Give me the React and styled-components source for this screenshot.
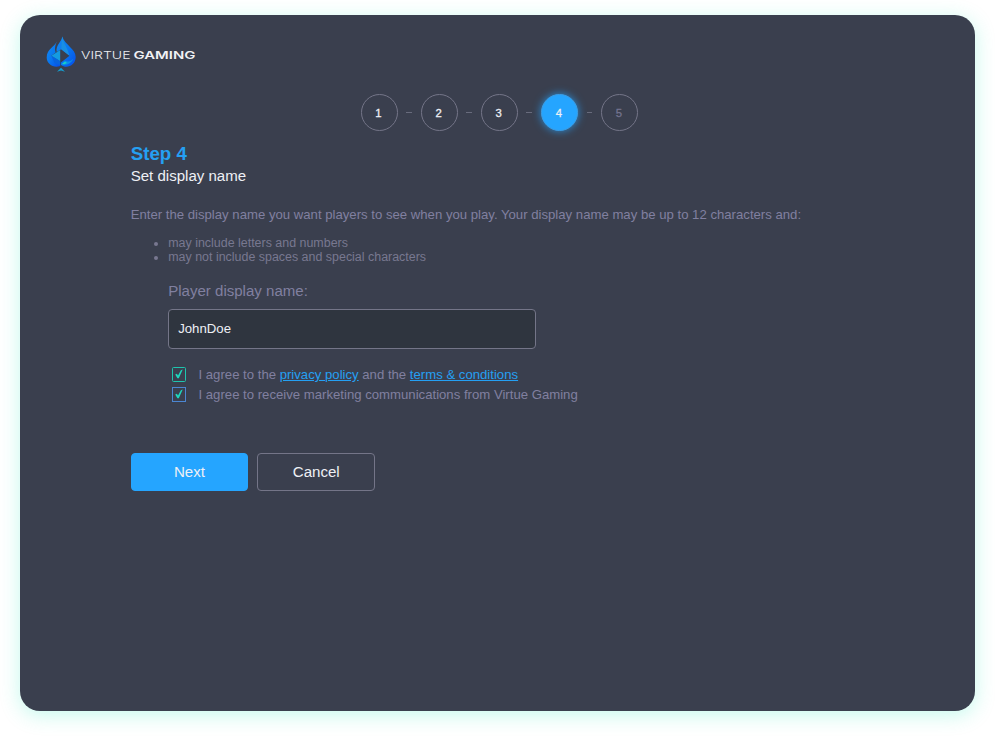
import React, { useState } from "react";
import styled, { createGlobalStyle, css } from "styled-components";

const Global = createGlobalStyle`
  * { box-sizing: border-box; }
  body {
    margin: 0;
    background: #fff;
    font-family: "Liberation Sans", Arial, Helvetica, sans-serif;
    color: #8180a0;
  }
`;

const Page = styled.div`
  height: 736px;
  padding: 15px 20px 25px;
  overflow: hidden;
`;

const Card = styled.main`
  display: flex;
  flex-direction: column;
  height: 696px;
  border-radius: 20px;
  background: #3a3f4e;
  box-shadow: 0 4px 20px rgba(40, 232, 190, 0.27);
`;

const Header = styled.header`
  height: 78.5px;
  padding: 20px 0 0 26px;
`;

const LogoSvg = styled.svg`
  display: block;
`;

const Steps = styled.ol`
  display: flex;
  align-items: center;
  gap: 8.7px;
  height: 37px;
  margin: 0 0 0 340.5px;
  padding: 0;
  list-style: none;
`;

const Step = styled.li`
  display: flex;
  align-items: center;
  justify-content: center;
  width: 37px;
  height: 37px;
  padding: 1px 1px 0 0;
  border: 1px solid #747588;
  border-radius: 50%;
  font-size: 11.3px;
  -webkit-text-stroke: 0.3px currentColor;
  color: ${(p) => (p.$state === "upcoming" ? "#73738f" : "#eef0f5")};
  ${(p) =>
    p.$state === "current" &&
    css`
      background: #25a5ff;
      border-color: #3d9de4;
      box-shadow: 0 0 9px rgba(37, 165, 255, 0.8);
    `}
`;

const Dash = styled.li`
  width: 5.75px;
  height: 1px;
  background: #686b7c;
`;

const Content = styled.form`
  display: flex;
  flex-direction: column;
  align-items: flex-start;
  padding: 12.4px 0 0 110.7px;
`;

const Title = styled.h1`
  margin: 0;
  font-size: 18.7px;
  line-height: 22px;
  color: #25a0f3;
`;

const Subtitle = styled.h2`
  margin: 0;
  font-size: 15.05px;
  font-weight: 400;
  line-height: 22px;
  color: #eef0f5;
`;

const Intro = styled.p`
  margin: 19.6px 0 0;
  font-size: 13.17px;
  line-height: 18px;
  white-space: nowrap;
`;

const Rules = styled.ul`
  margin: 11.5px 0 0;
  padding: 0 0 0 37.5px;
  font-size: 12.45px;
  line-height: 14px;
  color: #787890;
`;

const Fields = styled.div`
  display: flex;
  flex-direction: column;
  padding-left: 37.5px;
`;

const Label = styled.label`
  margin-top: 17px;
  font-size: 15.05px;
  line-height: 20px;
`;

const Input = styled.input`
  width: 368px;
  height: 40px;
  margin: 8px 0 15.5px;
  padding: 0 9px 1px;
  border: 1px solid #747588;
  border-radius: 4px;
  outline: none;
  background: #2f353f;
  color: #eef0f5;
  font-family: inherit;
  font-size: 13.2px;
`;

const CheckRow = styled.label`
  display: flex;
  align-items: center;
  gap: 12px;
  height: 20px;
  padding-left: 3.8px;
  font-size: 13.17px;
  white-space: nowrap;
`;

const Box = styled.span`
  display: flex;
  align-items: center;
  justify-content: center;
  width: 14.5px;
  height: 14.5px;
  border: 1px solid ${(p) => p.$color};
  border-radius: ${(p) => p.$radius};
`;

const HiddenCheck = styled.input`
  display: none;
`;

const Link = styled.a`
  color: #25a0f3;
  text-decoration: underline;
`;

const Actions = styled.div`
  display: flex;
  gap: 9.3px;
  margin-top: 48.5px;
`;

const Button = styled.button`
  width: 117.5px;
  height: 38px;
  padding: 0 0 1px;
  border: 1px solid ${(p) => (p.$primary ? "#25a5ff" : "#747588")};
  border-radius: 4px;
  background: ${(p) => (p.$primary ? "#25a5ff" : "transparent")};
  color: #eef0f5;
  font-family: inherit;
  font-size: 15.1px;
`;

function Logo() {
  return (
    <LogoSvg width="152" height="40" viewBox="0 0 152 40" role="img" aria-label="Virtue Gaming">
      <defs>
        <linearGradient id="spade" x1="0" y1="0" x2="1" y2="1">
          <stop offset="0" stopColor="#1689f0" />
          <stop offset="0.5" stopColor="#0878f0" />
          <stop offset="1" stopColor="#064bea" />
        </linearGradient>
      </defs>
      <path d="M10.700 6.500C9 11.500.7 14 .7 22.500c0 6.500 7 11 13.500 8.500v-4.700L5.300 20.700 9.700 17.500C8 13 10 9.500 10.700 6.500Z" fill="url(#spade)" />
      <path d="M16.200 1.500C16 6.500 9.500 10 10.700 17L15.200 14.300 23.500 20.700 15 27.500v2.500c6 4.500 14.700 0 14.700-8C29.700 14 19 10 16.200 1.500Z" fill="url(#spade)" />
      <path d="M16.200 1.500c1 6.500 5 10.500 7.300 19.200L15.200 14.300Z" fill="#1a8fe2" />
      <path d="M5.300 20.700 14.200 15v11.300Z" fill="#149be1" />
      <path d="m5.300 20.700 8.900 5.600v4.200L8.500 28Z" fill="#0763de" />
      <path d="M15 29.500c5 1.500 10.500-1 12.500-6-2.500 3-5 3.500-8.500 2.500Z" fill="#0b8ee6" />
      <path d="m16 28.700 3-2.300 2 1.500-3 1.300Z" fill="#18d0c4" />
      <path d="m15 32.800 4 4-4-1.300-4 1.300Z" fill="#159fd0" />
      <text x="35" y="24" textLength="49.500" lengthAdjust="spacingAndGlyphs" fontFamily="Inter" fontWeight="300" fontSize="10.600" fill="#eceef2">VIRTUE</text>
      <text x="87.500" y="24" textLength="62" lengthAdjust="spacingAndGlyphs" fontFamily="Inter" fontWeight="600" fontSize="10.600" fill="#f1f2f5">GAMING</text>
    </LogoSvg>
  );
}

function Check({ color, radius, children }) {
  const [checked, setChecked] = useState(true);
  return (
    <CheckRow>
      <HiddenCheck type="checkbox" checked={checked} onChange={() => setChecked(!checked)} />
      <Box $color={color} $radius={radius}>
        {checked && (
          <svg width="10" height="10" viewBox="0 0 10 10">
            <path d="M1.200 5.500 2.900 4.800 4 6.500 6.900 1.200 8.700.5 4.800 9.200 3.400 9.200Z" fill="#1fd6bd" />
          </svg>
        )}
      </Box>
      <span>{children}</span>
    </CheckRow>
  );
}

const stateOf = (n) => (n < 4 ? "done" : n === 4 ? "current" : "upcoming");

export default function App() {
  const [name, setName] = useState("JohnDoe");
  return (
    <Page>
      <Global />
      <Card>
        <Header>
          <Logo />
        </Header>
        <Steps>
          {[1, 2, 3, 4, 5].map((n) => (
            <React.Fragment key={n}>
              {n > 1 && <Dash />}
              <Step $state={stateOf(n)}>{n}</Step>
            </React.Fragment>
          ))}
        </Steps>
        <Content onSubmit={(e) => e.preventDefault()}>
          <Title>Step 4</Title>
          <Subtitle>Set display name</Subtitle>
          <Intro>
            Enter the display name you want players to see when you play. Your display name may be up to 12 characters and:
          </Intro>
          <Rules>
            <li>may include letters and numbers</li>
            <li>may not include spaces and special characters</li>
          </Rules>
          <Fields>
            <Label htmlFor="display-name">Player display name:</Label>
            <Input id="display-name" value={name} onChange={(e) => setName(e.target.value)} />
            <Check color="#1fc4ae" radius="1.5px">
              I agree to the <Link href="#">privacy policy</Link> and the <Link href="#">terms &amp; conditions</Link>
            </Check>
            <Check color="#4b86d2" radius="0">
              I agree to receive marketing communications from Virtue Gaming
            </Check>
          </Fields>
          <Actions>
            <Button type="submit" $primary>Next</Button>
            <Button type="button">Cancel</Button>
          </Actions>
        </Content>
      </Card>
    </Page>
  );
}
